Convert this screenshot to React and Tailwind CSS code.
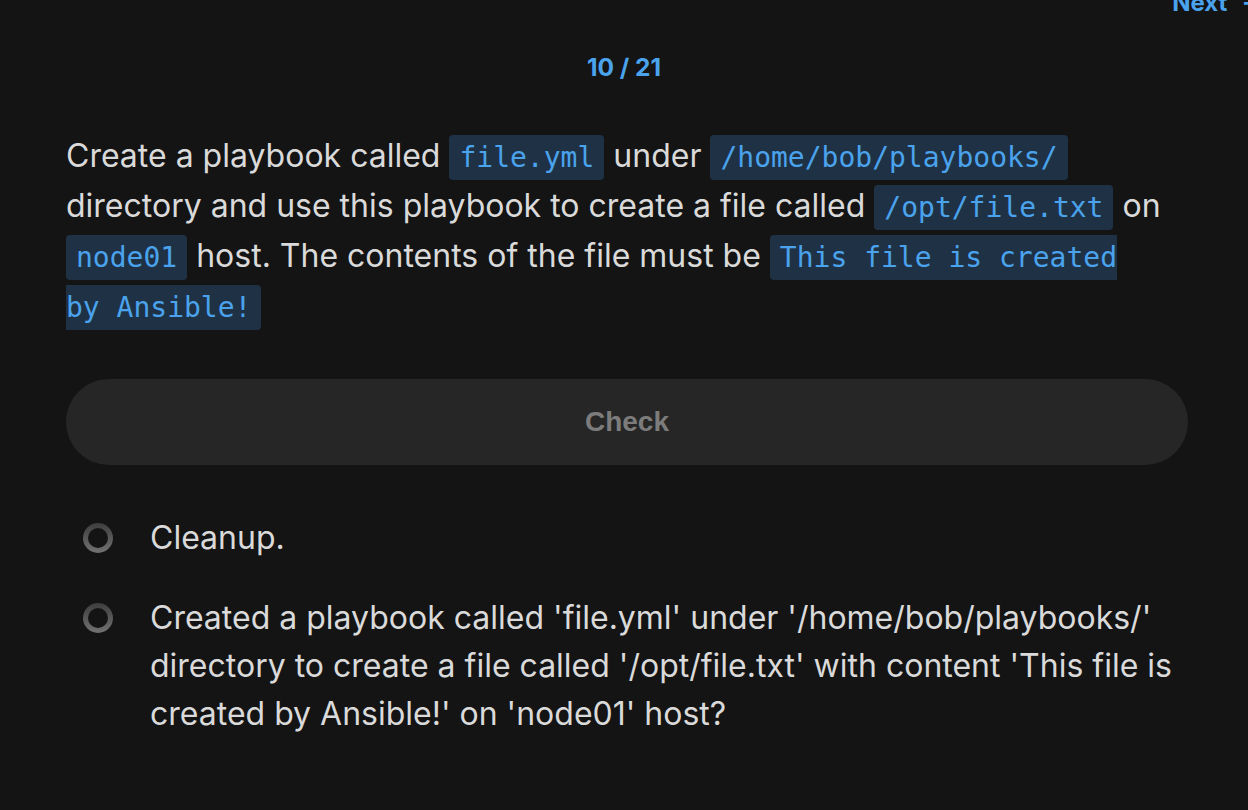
const sans = "font-['Inter','Noto_Sans',sans-serif]";

function Code({ children }) {
  return (
    <code className="rounded-[4px] bg-[#1f3245] px-[10px] py-[6px] font-['DejaVu_Sans_Mono','Liberation_Mono',monospace] text-[28px] leading-none text-[#4aa3ec]">
      {children}
    </code>
  );
}

function Radio() {
  return (
    <div className="mt-[9px] h-[30px] w-[30px] shrink-0 rounded-full bg-gradient-to-b from-[#3e3e3e] to-[#727272] p-[5px]">
      <div className="h-full w-full rounded-full bg-[#141414]" />
    </div>
  );
}

export default function App() {
  return (
    <div className={`min-h-[810px] w-full overflow-hidden bg-[#141414] ${sans}`}>
      <div className="-mt-[12px] flex justify-end">
        <span className="-mr-[16px] text-[24px] font-bold leading-[30px] text-[#4aa3ec]">
          Next <span className="ml-[8px]">→</span>
        </span>
      </div>

      <div className="mt-[35px] text-center text-[24.5px] font-bold leading-[28px] text-[#4aa3ec]">
        10 / 21
      </div>

      <div className="pl-[66px] pr-[60px]">
        <p className="mt-[50px] mr-[22px] text-[32px] leading-[50px] text-[#dadada]">
          Create a playbook called <Code>file.yml</Code> under <Code>/home/bob/playbooks/</Code>{" "}
          directory and use this playbook to create a file called <Code>/opt/file.txt</Code> on{" "}
          <Code>node01</Code> host. The contents of the file must be{" "}
          <Code>This file is created by Ansible!</Code>
        </p>

        <button
          type="button"
          className="mt-[48px] flex h-[86px] w-full items-center justify-center rounded-full bg-[#262626] font-['Liberation_Sans',Arial,sans-serif] text-[28px] font-bold text-[#7c7c7c]"
        >
          Check
        </button>

        <ul className="mt-[49px] flex flex-col gap-[32px] pl-[17px]">
          <li className="flex items-start gap-[37px]">
            <Radio />
            <span className="text-[32px] leading-[48px] text-[#dadada]">Cleanup.</span>
          </li>
          <li className="flex items-start gap-[37px]">
            <Radio />
            <span className="text-[32px] leading-[48px] text-[#dadada]">
              Created a playbook called 'file.yml' under '/home/bob/playbooks/' directory to create a file called
              '/opt/file.txt' with content 'This file is created by Ansible!' on 'node01' host?
            </span>
          </li>
        </ul>
      </div>
    </div>
  );
}
